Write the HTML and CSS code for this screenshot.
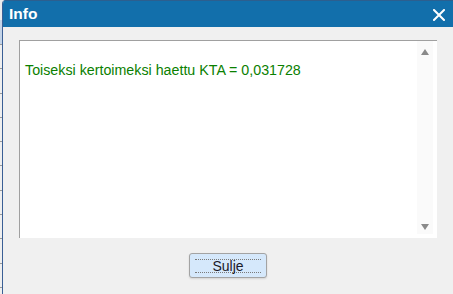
FILE: index.html
```html
<!DOCTYPE html>
<html lang="fi">
<head>
<meta charset="utf-8">
<title>Info</title>
<link rel="stylesheet" href="styles.css">
</head>
<body>
<div class="page">
  <div class="backdrop"></div>
  <div class="dialog">
    <div class="titlebar">
      <span class="title">Info</span>
      <svg class="close" width="12" height="12" viewBox="0 0 12 12" aria-label="Sulje">
        <path d="M1 1 L11 11 M11 1 L1 11" stroke="#fff" stroke-width="2" stroke-linecap="square" fill="none"/>
      </svg>
    </div>
    <div class="content">
      <div class="textbox">
        <div class="message">Toiseksi kertoimeksi haettu KTA = 0,031728</div>
        <div class="scrollbar">
          <span class="arrow up"></span>
          <span class="arrow down"></span>
        </div>
      </div>
      <div class="buttons">
        <button class="btn"><span class="focus">Sulje</span></button>
      </div>
    </div>
  </div>
</div>
</body>
</html>
```

FILE: styles.css
```css
html, body {
  margin: 0;
  padding: 0;
}
body {
  width: 453px;
  height: 294px;
  overflow: hidden;
  background: #ececec;
  font-family: "Liberation Sans", Arial, sans-serif;
}
.page {
  display: flex;
  height: 294px;
}
.backdrop {
  width: 2px;
  flex: none;
  background:
    linear-gradient(#ececec 0 20px, #c4d4e8 20px 44px, transparent 44px),
    repeating-linear-gradient(to bottom, #9a9a9a 0 1px, #efefef 1px 24.3px);
  background-position: 0 0, 0 44px;
  background-repeat: no-repeat, repeat;
}
.dialog {
  flex: 1;
  display: flex;
  flex-direction: column;
  border-left: 1px solid #3a5f95;
  border-top-left-radius: 4px;
  overflow: hidden;
  background: #f0f0f0;
}
.titlebar {
  height: 27px;
  flex: none;
  box-sizing: border-box;
  background: #126fab;
  border-top: 1px solid #2c5f8f;
  display: flex;
  align-items: center;
  justify-content: space-between;
  padding: 0 8px 0 6px;
}
.title {
  color: #fff;
  font-weight: bold;
  font-size: 15.5px;
  line-height: 18px;
}
.close {
  display: block;
  margin-top: 2px;
}
.content {
  flex: 1;
  display: flex;
  flex-direction: column;
  padding: 13px 16px 0 16px;
}
.textbox {
  height: 198px;
  box-sizing: border-box;
  background: #fff;
  border-top: 1px solid #a0a0a0;
  border-left: 1px solid #a0a0a0;
  display: flex;
}
.message {
  flex: 1;
  padding: 21px 0 0 5px;
  color: #0a8000;
  font-size: 14.25px;
  line-height: 16px;
}
.scrollbar {
  width: 16px;
  margin: 0 4px 4px 0;
  background: #fafafa;
  display: flex;
  flex-direction: column;
  justify-content: space-between;
  align-items: center;
  padding: 8px 0 4px;
  box-sizing: border-box;
}
.arrow {
  width: 0;
  height: 0;
  border-left: 4.5px solid transparent;
  border-right: 4.5px solid transparent;
}
.arrow.up {
  border-bottom: 6px solid #8a8a8a;
}
.arrow.down {
  border-top: 6px solid #8a8a8a;
}
.buttons {
  display: flex;
  justify-content: center;
  padding-top: 15px;
}
.btn {
  width: 78px;
  height: 25px;
  box-sizing: border-box;
  background: #d5e8fb;
  border: 1px solid #a3a3a3;
  border-radius: 3px;
  box-shadow: 0 1px 2px rgba(0,0,0,0.12);
  padding: 0;
  display: flex;
  align-items: center;
  justify-content: center;
  font-family: "Liberation Sans", Arial, sans-serif;
  font-size: 14px;
  color: #1a1a2a;
}
.focus {
  width: 66px;
  height: 12px;
  line-height: 12px;
  border-top: 1px dotted #7a7a7a;
  border-bottom: 1px dotted #7a7a7a;
  text-align: center;
}
```
